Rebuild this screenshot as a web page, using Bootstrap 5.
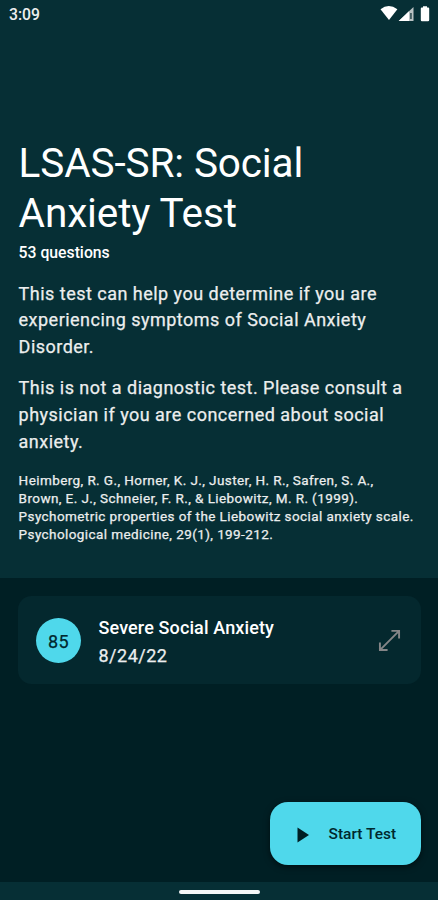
<!DOCTYPE html>
<html lang="en" data-bs-theme="dark">
<head>
<meta charset="utf-8">
<meta name="viewport" content="width=device-width, initial-scale=1">
<title>LSAS-SR: Social Anxiety Test</title>
<link href="https://cdn.jsdelivr.net/npm/bootstrap@5.3.0/dist/css/bootstrap.min.css" rel="stylesheet">
<style>
  body { font-family: Roboto, sans-serif; background: #062f35; color: #eceeee; }
  .screen { height: 900px; }
  .status-bar { height: 28px; padding: 0 8px 0 9px; font-size: 15.75px; line-height: 30px; }
  .intro { height: 550px; padding: 111px 12px 0 18.6px; }
  .test-title { font-size: 40.5px; line-height: 49.5px; letter-spacing: -.12px; font-weight: 400; color: #fff; }
  .test-count { font-size: 15.75px; line-height: 22.5px; margin: 4px 0 16px; color: #fff; }
  .test-text { font-size: 18px; line-height: 26.8px; letter-spacing: .48px; margin-bottom: 14.6px; -webkit-text-stroke: .25px; }
  .test-source { font-size: 13.5px; line-height: 17.9px; letter-spacing: .41px; padding-top: 1.5px; -webkit-text-stroke: .25px; }
  .results { background: #001f24; padding: 18px 17.500px 17px 18px; }
  .result-card { height: 88px; width: 403px; background: #04282e; border-radius: 13.5px; padding: 0 20px 0 18px; }
  .score { width: 45px; height: 45px; background: #4fd8eb; color: #00282e; font-size: 18px; letter-spacing: .3px; padding-top: 2px; -webkit-text-stroke: .25px; }
  .result-name { font-size: 18px; line-height: 28px; letter-spacing: .12px; padding: 3px 0 0 17.5px; }
  .result-date { letter-spacing: .5px; -webkit-text-stroke: .25px; }
  .start-btn { width: 151px; height: 63px; border-radius: 18px; background: #4fd8eb; color: #00282e; font-size: 15.5px; padding: 2px 0 0 26px; box-shadow: 0 2px 6px rgba(0,0,0,.55); }
  .start-btn svg { margin-right: 18px; }
  .start-btn:hover { background: #4fd8eb; color: #00282e; }
  .nav-strip { height: 18px; padding-top: 2px; }
  .nav-handle { width: 81px; height: 4px; background: #f5f7f7; }
</style>
</head>
<body>
<div class="screen d-flex flex-column overflow-hidden">
  <header class="status-bar d-flex justify-content-between flex-shrink-0 fw-medium">
    <span>3:09</span>
    <svg width="50" height="28" viewBox="380 0 50 28" aria-hidden="true">
      <path d="M380.5 9.2Q388.7 3 397.4 9.2L389 20Z" fill="#fff"/>
      <path d="M413.5 7V21H398.7Z" fill="#b9c2c3"/>
      <path d="M409 11.3V21H398.7Z" fill="#fff"/>
      <path d="M410.2 13h1.5v6h-1.5z" fill="#29474b"/>
      <path d="M423 6.3h4v1.3h1.2q1 0 1 1V20q0 1.2-1.2 1.2h-6q-1.2 0-1.2-1.2V8.600q0-1 1-1H423Z" fill="#fff"/>
    </svg>
  </header>
  <section class="intro flex-shrink-0">
    <h1 class="test-title mb-0">LSAS-SR: Social<br>Anxiety Test</h1>
    <p class="test-count fw-medium">53 questions</p>
    <p class="test-text">This test can help you determine if you are<br>experiencing symptoms of Social Anxiety<br>Disorder.</p>
    <p class="test-text">This is not a diagnostic test. Please consult a<br>physician if you are concerned about social<br>anxiety.</p>
    <p class="test-source mb-0 text-nowrap">Heimberg, R. G., Horner, K. J., Juster, H. R., Safren, S. A.,<br>Brown, E. J., Schneier, F. R., &amp; Liebowitz, M. R. (1999).<br>Psychometric properties of the Liebowitz social anxiety scale.<br>Psychological medicine, 29(1), 199-212.</p>
  </section>
  <main class="results d-flex flex-column flex-grow-1 justify-content-between">
    <article class="result-card d-flex align-items-center">
      <div class="score rounded-circle d-flex align-items-center justify-content-center flex-shrink-0">85</div>
      <div class="result-name flex-grow-1">
        <div class="fw-medium text-white">Severe Social Anxiety</div>
        <div class="result-date">8/24/22</div>
      </div>
      <svg width="23" height="24" viewBox="0 0 24 24" fill="none" stroke="#858587" stroke-width="2" aria-hidden="true">
        <path d="M2 22.500 22 2.500M14 2.500H22V10.500M2 14.500V22.500H10"/>
      </svg>
    </article>
    <button class="start-btn btn border-0 d-flex align-items-center align-self-end fw-medium" type="button">
      <svg width="15" height="16" viewBox="0 0 15 16" aria-hidden="true"><path d="M1.500 .5 13 8 1.500 15.500Z" fill="#001f24"/></svg>
      <span>Start Test</span>
    </button>
  </main>
  <footer class="nav-strip d-flex align-items-center justify-content-center flex-shrink-0">
    <div class="nav-handle rounded-pill"></div>
  </footer>
</div>
<script src="https://cdn.jsdelivr.net/npm/bootstrap@5.3.0/dist/js/bootstrap.bundle.min.js"></script>
</body>
</html>
